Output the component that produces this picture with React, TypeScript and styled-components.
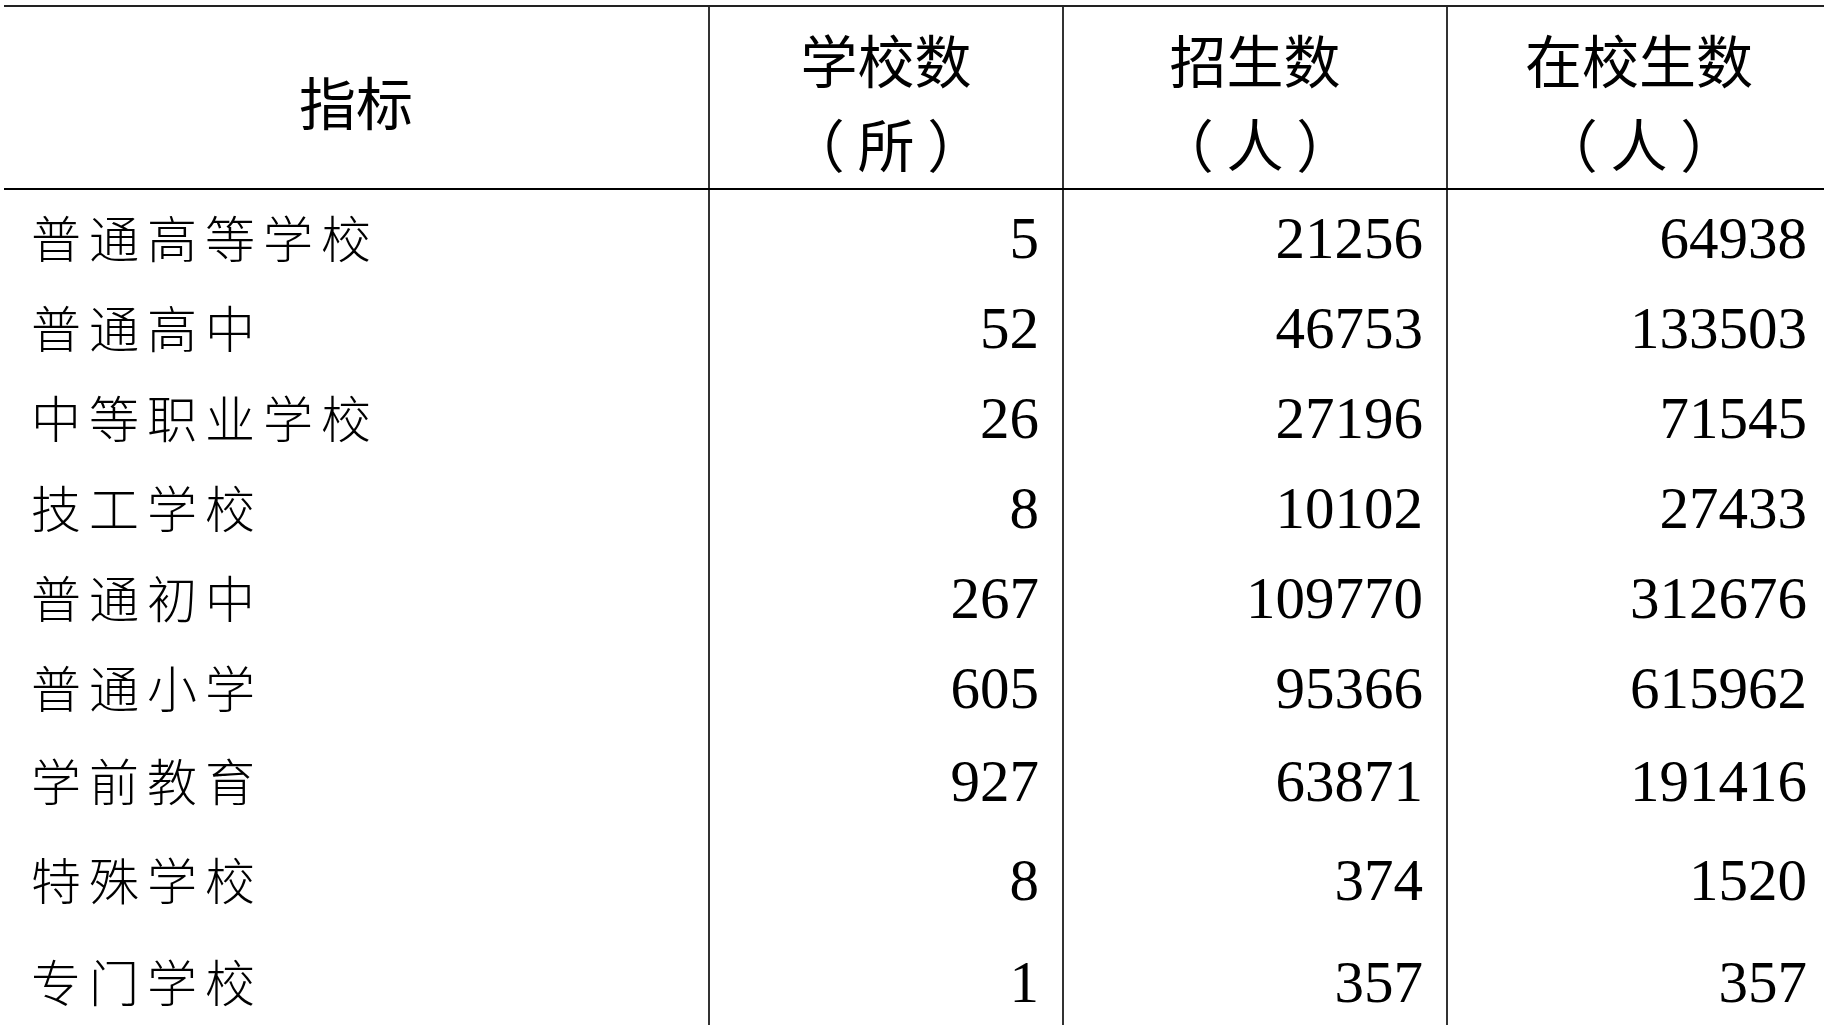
import React from 'react';
import styled, { createGlobalStyle } from 'styled-components';

const GlobalStyle = createGlobalStyle`
  html,
  body {
    margin: 0;
    padding: 0;
    background: #fff;
    overflow: hidden;
  }
`;

const Page = styled.div`
  padding: 5px 0 0 4px;
  width: 1830px;
`;

const Table = styled.div`
  display: flex;
  flex-direction: column;
  border-top: 2px solid #222;
`;

const Row = styled.div<{ $height: number; $head?: boolean }>`
  display: grid;
  grid-template-columns: 704px 354px 384px 384px;
  height: ${(props): number => props.$height}px;
  border-bottom: ${(props): string => (props.$head ? '2px solid #000' : 'none')};
  box-sizing: border-box;
`;

const Cell = styled.div<{ $first?: boolean; $offset?: number }>`
  display: flex;
  align-items: center;
  border-left: ${(props): string => (props.$first ? 'none' : '2px solid #333')};
  padding-top: ${(props): number => props.$offset ?? 0}px;
  box-sizing: border-box;
  min-width: 0;
`;

const HeadCell = styled(Cell)`
  flex-direction: column;
  justify-content: center;
  padding-top: 4px;
  font-family: 'Noto Sans CJK SC', 'Noto Sans', sans-serif;
  font-size: 57px;
  line-height: 84px;
  text-align: center;
  color: #000;
  white-space: pre;
`;

const Label = styled(Cell)`
  padding-left: 27px;
  padding-bottom: 5px;
  font-family: 'Noto Sans CJK SC', sans-serif;
  font-weight: 300;
  font-size: 50px;
  letter-spacing: 8px;
  color: #000;
`;

const Num = styled(Cell)`
  justify-content: flex-end;
  padding-right: 23px;
  font-family: 'Liberation Serif', 'Times New Roman', serif;
  font-size: 59px;
  color: #000;
`;

type Item = {
  name: string;
  schools: number;
  enrolled: number;
  students: number;
  height: number;
  offset?: number;
};

const items: Item[] = [
  { name: '普通高等学校', schools: 5, enrolled: 21256, students: 64938, height: 93, offset: 4 },
  { name: '普通高中', schools: 52, enrolled: 46753, students: 133503, height: 90 },
  { name: '中等职业学校', schools: 26, enrolled: 27196, students: 71545, height: 90 },
  { name: '技工学校', schools: 8, enrolled: 10102, students: 27433, height: 90 },
  { name: '普通初中', schools: 267, enrolled: 109770, students: 312676, height: 90 },
  { name: '普通小学', schools: 605, enrolled: 95366, students: 615962, height: 90 },
  { name: '学前教育', schools: 927, enrolled: 63871, students: 191416, height: 96 },
  { name: '特殊学校', schools: 8, enrolled: 374, students: 1520, height: 102 },
  { name: '专门学校', schools: 1, enrolled: 357, students: 357, height: 102 },
];

const App = (): JSX.Element => (
  <>
    <GlobalStyle />
    <Page>
      <Table>
        <Row $height={183} $head>
          <HeadCell $first>指标</HeadCell>
          <HeadCell>{'学校数\n（ 所 ）'}</HeadCell>
          <HeadCell>{'招生数\n（ 人 ）'}</HeadCell>
          <HeadCell>{'在校生数\n（ 人 ）'}</HeadCell>
        </Row>
        {items.map((item) => (
          <Row key={item.name} $height={item.height}>
            <Label $first $offset={item.offset}>
              {item.name}
            </Label>
            <Num $offset={item.offset}>{item.schools}</Num>
            <Num $offset={item.offset}>{item.enrolled}</Num>
            <Num $offset={item.offset}>{item.students}</Num>
          </Row>
        ))}
      </Table>
    </Page>
  </>
);

export default App;
